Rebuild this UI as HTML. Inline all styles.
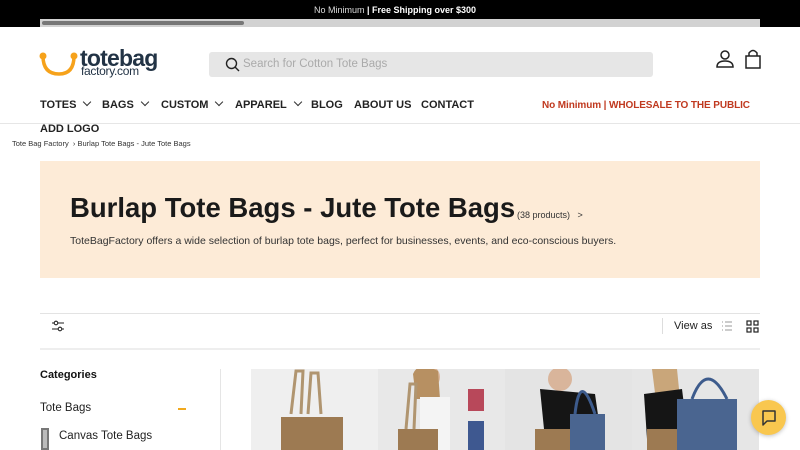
<!DOCTYPE html>
<html><head><meta charset="utf-8"><style>
*{margin:0;padding:0;box-sizing:border-box}
body{width:800px;height:450px;overflow:hidden;background:#fff;font-family:"Liberation Sans",sans-serif;color:#121212;position:relative}
.a{position:absolute}
.top{left:0;top:0;width:800px;height:27px;background:#000}
.nav{font-size:11px;font-weight:bold;color:#222;top:99px;white-space:nowrap}
.chev{display:inline-block;width:6px;height:6px;border-right:1.3px solid #333;border-bottom:1.3px solid #333;transform:rotate(45deg);margin-left:8px;position:relative;top:-3px}
.panel{top:369px;height:81px;width:127px;background:#ececec;overflow:hidden}
</style></head><body>
<div class="a top"></div>
<div class="a" style="left:40px;top:19px;width:720px;height:8px;background:#d2d2d2"></div>
<div class="a" style="left:42px;top:21px;width:202px;height:4px;background:#777;border-radius:2px"></div>
<div class="a" style="left:0;top:5px;width:790px;text-align:center;font-size:9px;color:#ddd">No Minimum <b style="color:#fff">| Free Shipping over $300</b></div>

<svg class="a" style="left:39px;top:50px" width="42" height="28" viewBox="0 0 42 28"><path d="M4 6 Q4 24 20 24 Q35 24 35 6" fill="none" stroke="#f6a21b" stroke-width="3.5"/><circle cx="4" cy="6" r="3.5" fill="#f6a21b"/><circle cx="35" cy="6" r="3.5" fill="#f6a21b"/></svg>
<div class="a" style="left:80px;top:45px;font-size:23px;font-weight:bold;color:#223345;letter-spacing:-0.8px">totebag</div>
<div class="a" style="left:81px;top:64px;font-size:12px;color:#223345;letter-spacing:-0.3px">factory.com</div>

<div class="a" style="left:209px;top:52px;width:444px;height:25px;background:#e6e6e6;border-radius:3px"></div>
<svg class="a" style="left:225px;top:57px" width="15" height="15" viewBox="0 0 15 15"><circle cx="6.5" cy="6.5" r="5" fill="none" stroke="#222" stroke-width="1.4"/><path d="M10 10 L14 14" stroke="#222" stroke-width="1.4"/></svg>
<div class="a" style="left:243px;top:58px;font-size:11.5px;color:#aaa">Search for Cotton Tote Bags</div>

<svg class="a" style="left:715px;top:49px" width="20" height="20" viewBox="0 0 20 20" fill="none" stroke="#222" stroke-width="1.5"><circle cx="10" cy="6" r="4"/><path d="M2 18 Q2 12 10 12 Q18 12 18 18 Z"/></svg>
<svg class="a" style="left:744px;top:49px" width="18" height="20" viewBox="0 0 18 20" fill="none" stroke="#222" stroke-width="1.5"><rect x="2" y="7" width="14" height="12"/><path d="M5 7 V4 Q9 -1 13 4 V7"/></svg>

<div class="a nav" style="left:40px">TOTES<span class="chev"></span></div>
<div class="a nav" style="left:102px">BAGS<span class="chev"></span></div>
<div class="a nav" style="left:161px">CUSTOM<span class="chev"></span></div>
<div class="a nav" style="left:235px">APPAREL<span class="chev"></span></div>
<div class="a nav" style="left:311px">BLOG</div>
<div class="a nav" style="left:354px">ABOUT US</div>
<div class="a nav" style="left:421px">CONTACT</div>
<div class="a nav" style="left:542px;color:#c0391f;font-size:10px;top:100px;letter-spacing:-0.1px">No Minimum | WHOLESALE TO THE PUBLIC</div>
<div class="a" style="left:0;top:123px;width:800px;height:1px;background:#e6e6e6"></div>
<div class="a nav" style="left:40px;top:123px">ADD LOGO</div>
<div class="a" style="left:12px;top:139px;font-size:7.5px;color:#333">Tote Bag Factory &nbsp;›&nbsp;Burlap Tote Bags - Jute Tote Bags</div>

<div class="a" style="left:40px;top:161px;width:720px;height:117px;background:#fdebd7"></div>
<div class="a" style="left:70px;top:192px;font-size:27.5px;font-weight:bold;color:#1a1a1a;white-space:nowrap">Burlap Tote Bags - Jute Tote Bags</div>
<div class="a" style="left:517px;top:210px;font-size:9px;color:#333">(38 products) &nbsp;&nbsp;&gt;</div>
<div class="a" style="left:70px;top:235px;font-size:10.5px;color:#333;white-space:nowrap">ToteBagFactory offers a wide selection of burlap tote bags, perfect for businesses, events, and eco-conscious buyers.</div>

<div class="a" style="left:40px;top:313px;width:720px;height:1px;background:#e3e3e3"></div>
<div class="a" style="left:40px;top:348px;width:720px;height:2px;background:#eee"></div>
<svg class="a" style="left:51px;top:319px" width="14" height="14" viewBox="0 0 14 14" fill="none" stroke="#222" stroke-width="1.1"><path d="M1 4H13M1 10H13"/><circle cx="5" cy="4" r="1.8" fill="#fff"/><circle cx="9" cy="10" r="1.8" fill="#fff"/></svg>
<div class="a" style="left:662px;top:318px;width:1px;height:16px;background:#ddd"></div>
<div class="a" style="left:674px;top:320px;font-size:11px;color:#222">View as</div>
<svg class="a" style="left:721px;top:320px" width="12" height="12" viewBox="0 0 12 12" stroke="#999" stroke-width="1"><path d="M1 2H2M4 2H11M1 6H2M4 6H11M1 10H2M4 10H11"/></svg>
<svg class="a" style="left:746px;top:320px" width="13" height="13" viewBox="0 0 13 13" fill="none" stroke="#222" stroke-width="1.2"><rect x="1" y="1" width="4" height="4"/><rect x="8" y="1" width="4" height="4"/><rect x="1" y="8" width="4" height="4"/><rect x="8" y="8" width="4" height="4"/></svg>

<div class="a" style="left:40px;top:369px;font-size:11px;font-weight:bold">Categories</div>
<div class="a" style="left:40px;top:402px;font-size:11.5px;color:#222">Tote Bags</div>
<div class="a" style="left:178px;top:408px;width:8px;height:1.5px;background:#f1a91e"></div>
<div class="a" style="left:41px;top:428px;width:8px;height:22px;background:#bbb;border:2px solid #777"></div>
<div class="a" style="left:59px;top:430px;font-size:11.5px;color:#222">Canvas Tote Bags</div>
<div class="a" style="left:220px;top:369px;width:1px;height:81px;background:#e5e5e5"></div>

<div class="a panel" style="left:251px;background:#efefef"><svg width="127" height="81"><path d="M40 45 L45 2 L52 2 L50 45 M57 45 L60 4 L67 4 L70 45" stroke="#b09570" stroke-width="3" fill="none"/><rect x="30" y="48" width="62" height="40" fill="#9d7a52"/></svg></div>
<div class="a panel" style="left:378px;background:#e8e8e8"><svg width="127" height="81"><circle cx="50" cy="8" r="12" fill="#d9b59b"/><path d="M35 5 Q40 -8 60 2 L62 30 L38 30Z" fill="#b79062"/><rect x="42" y="28" width="30" height="53" fill="#f4f4f4"/><rect x="20" y="60" width="40" height="30" fill="#9d7a52"/><path d="M28 60 L32 15 L38 15 L36 60" stroke="#b09570" stroke-width="3" fill="none"/><rect x="90" y="20" width="16" height="22" fill="#b8485a"/><rect x="90" y="52" width="16" height="29" fill="#3e5890"/></svg></div>
<div class="a panel" style="left:505px;background:#e4e4e4"><svg width="127" height="81"><circle cx="55" cy="10" r="12" fill="#d9b59b"/><path d="M35 20 L90 25 L95 60 L40 70Z" fill="#151515"/><rect x="30" y="60" width="38" height="30" fill="#9d7a52"/><rect x="65" y="45" width="35" height="40" fill="#4a6590"/><path d="M70 45 Q75 0 90 45" stroke="#3d5b8c" stroke-width="3" fill="none"/></svg></div>
<div class="a panel" style="left:632px;background:#e6e6e6"><svg width="127" height="81"><path d="M20 0 L45 0 L48 30 L25 40Z" fill="#c9a67a"/><path d="M12 25 L50 20 L55 60 L15 70Z" fill="#151515"/><rect x="15" y="60" width="30" height="30" fill="#9d7a52"/><rect x="45" y="30" width="60" height="55" fill="#4a6590"/><path d="M60 30 Q75 -10 95 30" stroke="#3d5b8c" stroke-width="3" fill="none"/></svg></div>

<div class="a" style="left:751px;top:400px;width:35px;height:35px;border-radius:50%;background:#f9c74f;box-shadow:0 1px 4px rgba(0,0,0,.25)"></div>
<svg class="a" style="left:759px;top:408px" width="20" height="20" viewBox="0 0 20 20" fill="none" stroke="#333" stroke-width="1.5"><path d="M4 3H16V13H8L4 17Z" stroke-linejoin="round"/></svg>
</body></html>
